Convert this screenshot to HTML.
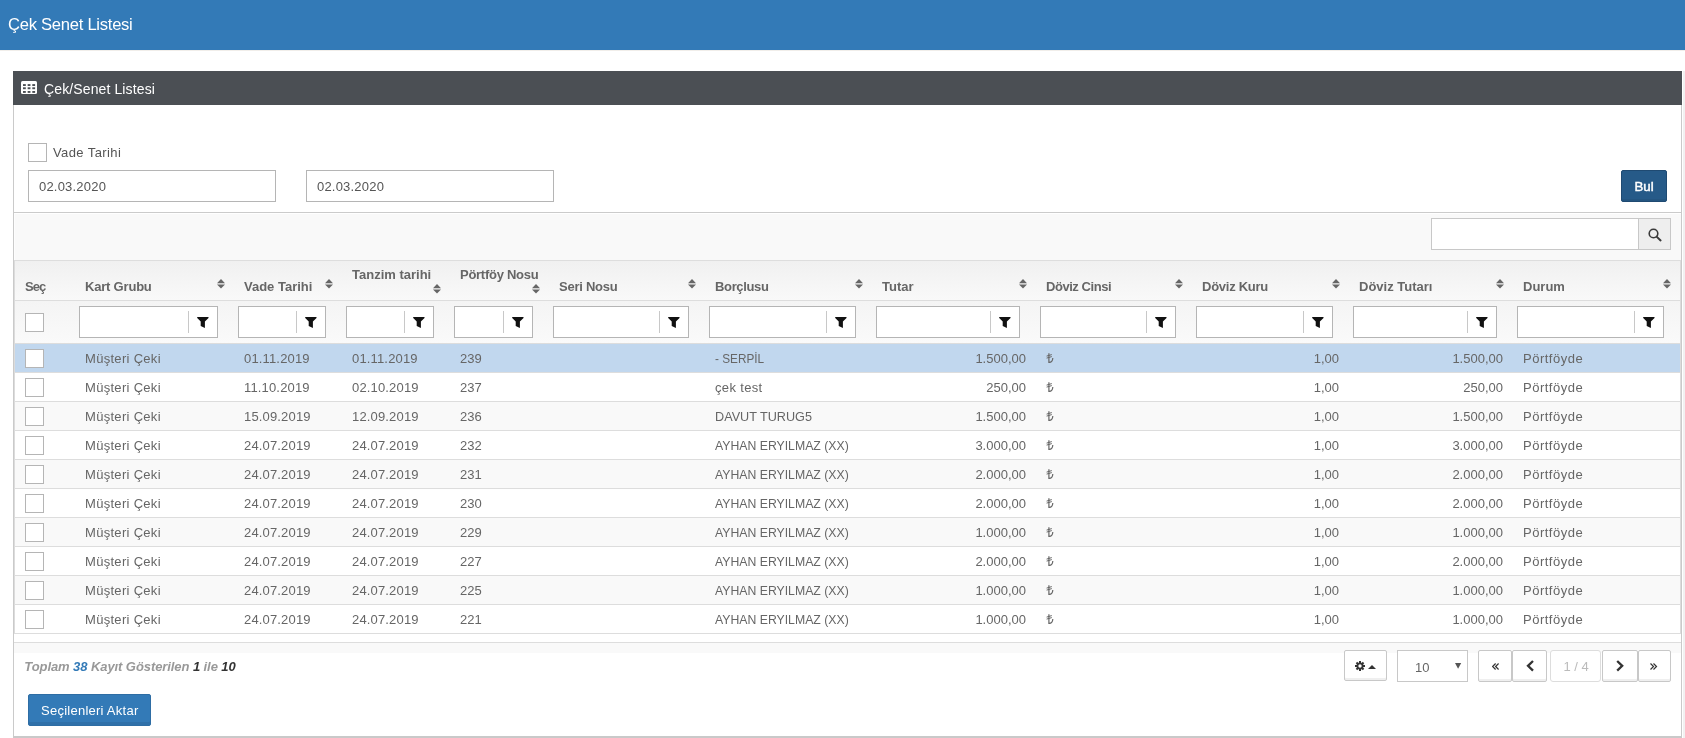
<!DOCTYPE html>
<html><head><meta charset="utf-8"><style>
html,body{margin:0;padding:0;}
body{width:1685px;height:738px;overflow:hidden;position:relative;background:#fff;font-family:"Liberation Sans", sans-serif;}
#root{position:absolute;left:0;top:0;width:1685px;height:738px;overflow:hidden;background:#fff;will-change:transform;}
#root>div,#root>svg{position:absolute;}
.t{white-space:nowrap;font-family:"Liberation Sans", sans-serif;}
</style></head><body><div id="root">
<div style="left:0px;top:0px;width:1685px;height:50px;background:#337ab7"></div>
<div style="left:0px;top:50px;width:1685px;height:1px;background:#f1eeea"></div>
<div class="t" style="left:8px;top:17.29px;font-size:16.6px;line-height:16.6px;font-weight:400;color:#fff;letter-spacing:-0.27px">Çek Senet Listesi</div>
<div style="left:1683px;top:71px;width:2px;height:667px;background:#f1f1f1"></div>
<div style="left:13px;top:71px;width:1669px;height:667px;border:1px solid #cacaca;border-top:none;border-bottom:2px solid #c9c9c9;box-sizing:border-box;background:#fff"></div>
<div style="left:13px;top:71px;width:1669px;height:34px;background:#4b4f54"></div>
<svg style="position:absolute;left:21px;top:81px" width="17" height="14" viewBox="0 0 17 14"><rect x="0" y="0" width="16" height="13" rx="1.5" fill="#fff"/><rect x="2.00" y="3.1" width="2.8" height="1.9" fill="#4b4f54"/><rect x="2.00" y="6.3" width="2.8" height="1.9" fill="#4b4f54"/><rect x="2.00" y="10" width="2.8" height="1.9" fill="#4b4f54"/><rect x="6.65" y="3.1" width="2.8" height="1.9" fill="#4b4f54"/><rect x="6.65" y="6.3" width="2.8" height="1.9" fill="#4b4f54"/><rect x="6.65" y="10" width="2.8" height="1.9" fill="#4b4f54"/><rect x="11.30" y="3.1" width="2.8" height="1.9" fill="#4b4f54"/><rect x="11.30" y="6.3" width="2.8" height="1.9" fill="#4b4f54"/><rect x="11.30" y="10" width="2.8" height="1.9" fill="#4b4f54"/></svg>
<div class="t" style="left:44px;top:82.10px;font-size:14px;line-height:14px;font-weight:400;color:#fff;letter-spacing:0.12px">Çek/Senet Listesi</div>
<div style="left:28px;top:143px;width:19px;height:19px;border:1px solid #b5b5b5;box-sizing:border-box;background:#fff"></div>
<div class="t" style="left:53px;top:145.95px;font-size:13px;line-height:13px;font-weight:400;color:#555;letter-spacing:0.4px">Vade Tarihi</div>
<div style="left:28px;top:170px;width:248px;height:32px;border:1px solid #b5b5b5;box-sizing:border-box;background:#fff"></div>
<div class="t" style="left:39px;top:179.95px;font-size:13px;line-height:13px;font-weight:400;color:#555;letter-spacing:0.2px">02.03.2020</div>
<div style="left:306px;top:170px;width:248px;height:32px;border:1px solid #b5b5b5;box-sizing:border-box;background:#fff"></div>
<div class="t" style="left:317px;top:179.95px;font-size:13px;line-height:13px;font-weight:400;color:#555;letter-spacing:0.2px">02.03.2020</div>
<div style="left:1621px;top:170px;width:46px;height:32px;background:#265a88;border:1px solid #1f4a72;box-sizing:border-box;border-radius:2px;box-shadow:inset 0 -2px 0 #245580"></div>
<div class="t" style="left:1634.5px;top:179.69px;font-size:13.3px;line-height:13.3px;font-weight:400;color:#fff;-webkit-text-stroke:0.45px #fff">Bul</div>
<div style="left:14px;top:212px;width:1667px;height:1px;background:#cbcbcb"></div>
<div style="left:14px;top:214px;width:1667px;height:46px;background:#f9f9f9;border-left:1px solid #fdfdfd;box-sizing:border-box"></div>
<div style="left:1431px;top:218px;width:240px;height:32px;border:1px solid #c8c8c8;box-sizing:border-box;background:#fff"></div>
<div style="left:1638px;top:218px;width:33px;height:32px;border:1px solid #c8c8c8;box-sizing:border-box;background:#eee"></div>
<svg style="position:absolute;left:1648px;top:228px" width="15" height="14" viewBox="0 0 15 14"><circle cx="5.5" cy="5.5" r="4.3" fill="none" stroke="#3a3a3a" stroke-width="1.6"/><line x1="8.6" y1="8.6" x2="12.6" y2="12.4" stroke="#3a3a3a" stroke-width="2" stroke-linecap="round"/></svg>
<div style="left:14px;top:260px;width:1667px;height:1px;background:#ddd"></div>
<div style="left:15px;top:261px;width:1665px;height:39px;background:linear-gradient(#f0f0f0,#f9f9f9)"></div>
<div style="left:14px;top:300px;width:1667px;height:1px;background:#ddd"></div>
<div style="left:15px;top:301px;width:1665px;height:42px;background:linear-gradient(#f4f4f4,#fafafa)"></div>
<div style="left:14px;top:343px;width:1667px;height:1px;background:#ddd"></div>
<div style="left:14px;top:260px;width:1px;height:374px;background:#dcdcdc"></div>
<div style="left:1680px;top:260px;width:1px;height:374px;background:#dcdcdc"></div>
<div class="t" style="left:25px;top:279.95px;font-size:13px;line-height:13px;font-weight:700;color:#666;letter-spacing:-0.9px">Seç</div>
<div class="t" style="left:85px;top:279.95px;font-size:13px;line-height:13px;font-weight:700;color:#666;letter-spacing:-0.2px">Kart Grubu</div>
<svg style="position:absolute;left:217px;top:279px" width="8" height="10" viewBox="0 0 8 10"><path d="M0 4.2 L4 0 L8 4.2 Z M0 5.4 L4 9.6 L8 5.4 Z" fill="#666"/></svg>
<div style="left:79px;top:306px;width:139px;height:32px;border:1px solid #b5b5b5;box-sizing:border-box;background:#fff"></div>
<div style="left:188px;top:311px;width:1px;height:22px;background:#c8c8c8"></div>
<svg style="position:absolute;left:197.2px;top:316.6px" width="12" height="11" viewBox="0 0 12 11"><path d="M0.2 0 H11.5 V0.9 L7.9 4.6 V11 L3.7 8.9 V4.6 L0.2 0.9 Z" fill="#111"/></svg>
<div class="t" style="left:244px;top:279.95px;font-size:13px;line-height:13px;font-weight:700;color:#666;letter-spacing:0px">Vade Tarihi</div>
<svg style="position:absolute;left:325px;top:279px" width="8" height="10" viewBox="0 0 8 10"><path d="M0 4.2 L4 0 L8 4.2 Z M0 5.4 L4 9.6 L8 5.4 Z" fill="#666"/></svg>
<div style="left:238px;top:306px;width:88px;height:32px;border:1px solid #b5b5b5;box-sizing:border-box;background:#fff"></div>
<div style="left:296px;top:311px;width:1px;height:22px;background:#c8c8c8"></div>
<svg style="position:absolute;left:305.2px;top:316.6px" width="12" height="11" viewBox="0 0 12 11"><path d="M0.2 0 H11.5 V0.9 L7.9 4.6 V11 L3.7 8.9 V4.6 L0.2 0.9 Z" fill="#111"/></svg>
<div class="t" style="left:352px;top:267.95px;font-size:13px;line-height:13px;font-weight:700;color:#666;letter-spacing:0px">Tanzim tarihi</div>
<svg style="position:absolute;left:433px;top:284px" width="8" height="10" viewBox="0 0 8 10"><path d="M0 4.2 L4 0 L8 4.2 Z M0 5.4 L4 9.6 L8 5.4 Z" fill="#666"/></svg>
<div style="left:346px;top:306px;width:88px;height:32px;border:1px solid #b5b5b5;box-sizing:border-box;background:#fff"></div>
<div style="left:404px;top:311px;width:1px;height:22px;background:#c8c8c8"></div>
<svg style="position:absolute;left:413.2px;top:316.6px" width="12" height="11" viewBox="0 0 12 11"><path d="M0.2 0 H11.5 V0.9 L7.9 4.6 V11 L3.7 8.9 V4.6 L0.2 0.9 Z" fill="#111"/></svg>
<div class="t" style="left:460px;top:267.95px;font-size:13px;line-height:13px;font-weight:700;color:#666;letter-spacing:-0.27px">Pörtföy Nosu</div>
<svg style="position:absolute;left:532px;top:284px" width="8" height="10" viewBox="0 0 8 10"><path d="M0 4.2 L4 0 L8 4.2 Z M0 5.4 L4 9.6 L8 5.4 Z" fill="#666"/></svg>
<div style="left:454px;top:306px;width:79px;height:32px;border:1px solid #b5b5b5;box-sizing:border-box;background:#fff"></div>
<div style="left:503px;top:311px;width:1px;height:22px;background:#c8c8c8"></div>
<svg style="position:absolute;left:512.2px;top:316.6px" width="12" height="11" viewBox="0 0 12 11"><path d="M0.2 0 H11.5 V0.9 L7.9 4.6 V11 L3.7 8.9 V4.6 L0.2 0.9 Z" fill="#111"/></svg>
<div class="t" style="left:559px;top:279.95px;font-size:13px;line-height:13px;font-weight:700;color:#666;letter-spacing:-0.25px">Seri Nosu</div>
<svg style="position:absolute;left:688px;top:279px" width="8" height="10" viewBox="0 0 8 10"><path d="M0 4.2 L4 0 L8 4.2 Z M0 5.4 L4 9.6 L8 5.4 Z" fill="#666"/></svg>
<div style="left:553px;top:306px;width:136px;height:32px;border:1px solid #b5b5b5;box-sizing:border-box;background:#fff"></div>
<div style="left:659px;top:311px;width:1px;height:22px;background:#c8c8c8"></div>
<svg style="position:absolute;left:668.2px;top:316.6px" width="12" height="11" viewBox="0 0 12 11"><path d="M0.2 0 H11.5 V0.9 L7.9 4.6 V11 L3.7 8.9 V4.6 L0.2 0.9 Z" fill="#111"/></svg>
<div class="t" style="left:715px;top:279.95px;font-size:13px;line-height:13px;font-weight:700;color:#666;letter-spacing:-0.35px">Borçlusu</div>
<svg style="position:absolute;left:855px;top:279px" width="8" height="10" viewBox="0 0 8 10"><path d="M0 4.2 L4 0 L8 4.2 Z M0 5.4 L4 9.6 L8 5.4 Z" fill="#666"/></svg>
<div style="left:709px;top:306px;width:147px;height:32px;border:1px solid #b5b5b5;box-sizing:border-box;background:#fff"></div>
<div style="left:826px;top:311px;width:1px;height:22px;background:#c8c8c8"></div>
<svg style="position:absolute;left:835.2px;top:316.6px" width="12" height="11" viewBox="0 0 12 11"><path d="M0.2 0 H11.5 V0.9 L7.9 4.6 V11 L3.7 8.9 V4.6 L0.2 0.9 Z" fill="#111"/></svg>
<div class="t" style="left:882px;top:279.95px;font-size:13px;line-height:13px;font-weight:700;color:#666;letter-spacing:0px">Tutar</div>
<svg style="position:absolute;left:1019px;top:279px" width="8" height="10" viewBox="0 0 8 10"><path d="M0 4.2 L4 0 L8 4.2 Z M0 5.4 L4 9.6 L8 5.4 Z" fill="#666"/></svg>
<div style="left:876px;top:306px;width:144px;height:32px;border:1px solid #b5b5b5;box-sizing:border-box;background:#fff"></div>
<div style="left:990px;top:311px;width:1px;height:22px;background:#c8c8c8"></div>
<svg style="position:absolute;left:999.2px;top:316.6px" width="12" height="11" viewBox="0 0 12 11"><path d="M0.2 0 H11.5 V0.9 L7.9 4.6 V11 L3.7 8.9 V4.6 L0.2 0.9 Z" fill="#111"/></svg>
<div class="t" style="left:1046px;top:279.95px;font-size:13px;line-height:13px;font-weight:700;color:#666;letter-spacing:-0.45px">Döviz Cinsi</div>
<svg style="position:absolute;left:1175px;top:279px" width="8" height="10" viewBox="0 0 8 10"><path d="M0 4.2 L4 0 L8 4.2 Z M0 5.4 L4 9.6 L8 5.4 Z" fill="#666"/></svg>
<div style="left:1040px;top:306px;width:136px;height:32px;border:1px solid #b5b5b5;box-sizing:border-box;background:#fff"></div>
<div style="left:1146px;top:311px;width:1px;height:22px;background:#c8c8c8"></div>
<svg style="position:absolute;left:1155.2px;top:316.6px" width="12" height="11" viewBox="0 0 12 11"><path d="M0.2 0 H11.5 V0.9 L7.9 4.6 V11 L3.7 8.9 V4.6 L0.2 0.9 Z" fill="#111"/></svg>
<div class="t" style="left:1202px;top:279.95px;font-size:13px;line-height:13px;font-weight:700;color:#666;letter-spacing:-0.26px">Döviz Kuru</div>
<svg style="position:absolute;left:1332px;top:279px" width="8" height="10" viewBox="0 0 8 10"><path d="M0 4.2 L4 0 L8 4.2 Z M0 5.4 L4 9.6 L8 5.4 Z" fill="#666"/></svg>
<div style="left:1196px;top:306px;width:137px;height:32px;border:1px solid #b5b5b5;box-sizing:border-box;background:#fff"></div>
<div style="left:1303px;top:311px;width:1px;height:22px;background:#c8c8c8"></div>
<svg style="position:absolute;left:1312.2px;top:316.6px" width="12" height="11" viewBox="0 0 12 11"><path d="M0.2 0 H11.5 V0.9 L7.9 4.6 V11 L3.7 8.9 V4.6 L0.2 0.9 Z" fill="#111"/></svg>
<div class="t" style="left:1359px;top:279.95px;font-size:13px;line-height:13px;font-weight:700;color:#666;letter-spacing:0px">Döviz Tutarı</div>
<svg style="position:absolute;left:1496px;top:279px" width="8" height="10" viewBox="0 0 8 10"><path d="M0 4.2 L4 0 L8 4.2 Z M0 5.4 L4 9.6 L8 5.4 Z" fill="#666"/></svg>
<div style="left:1353px;top:306px;width:144px;height:32px;border:1px solid #b5b5b5;box-sizing:border-box;background:#fff"></div>
<div style="left:1467px;top:311px;width:1px;height:22px;background:#c8c8c8"></div>
<svg style="position:absolute;left:1476.2px;top:316.6px" width="12" height="11" viewBox="0 0 12 11"><path d="M0.2 0 H11.5 V0.9 L7.9 4.6 V11 L3.7 8.9 V4.6 L0.2 0.9 Z" fill="#111"/></svg>
<div class="t" style="left:1523px;top:279.95px;font-size:13px;line-height:13px;font-weight:700;color:#666;letter-spacing:0px">Durum</div>
<svg style="position:absolute;left:1663px;top:279px" width="8" height="10" viewBox="0 0 8 10"><path d="M0 4.2 L4 0 L8 4.2 Z M0 5.4 L4 9.6 L8 5.4 Z" fill="#666"/></svg>
<div style="left:1517px;top:306px;width:147px;height:32px;border:1px solid #b5b5b5;box-sizing:border-box;background:#fff"></div>
<div style="left:1634px;top:311px;width:1px;height:22px;background:#c8c8c8"></div>
<svg style="position:absolute;left:1643.2px;top:316.6px" width="12" height="11" viewBox="0 0 12 11"><path d="M0.2 0 H11.5 V0.9 L7.9 4.6 V11 L3.7 8.9 V4.6 L0.2 0.9 Z" fill="#111"/></svg>
<div style="left:25px;top:313px;width:19px;height:19px;border:1px solid #b5b5b5;box-sizing:border-box;background:#fff"></div>
<div style="left:15px;top:344px;width:1665px;height:28px;background:#c1d7ee"></div>
<div style="left:14px;top:372px;width:1667px;height:1px;background:#ddd"></div>
<div style="left:25px;top:349px;width:19px;height:19px;border:1px solid #b5b5b5;box-sizing:border-box;background:#fff"></div>
<div class="t" style="left:85px;top:351.95px;font-size:13px;line-height:13px;font-weight:400;color:#666;letter-spacing:0.3px">Müşteri Çeki</div>
<div class="t" style="left:244px;top:351.95px;font-size:13px;line-height:13px;font-weight:400;color:#666;letter-spacing:0.16px">01.11.2019</div>
<div class="t" style="left:352px;top:351.95px;font-size:13px;line-height:13px;font-weight:400;color:#666;letter-spacing:0.16px">01.11.2019</div>
<div class="t" style="left:460px;top:351.95px;font-size:13px;line-height:13px;font-weight:400;color:#666;">239</div>
<div class="t" style="left:715px;top:351.95px;font-size:13px;line-height:13px;font-weight:400;color:#666;letter-spacing:0;transform:scaleX(0.906);transform-origin:0 0">- SERPİL</div>
<div class="t" style="right:659px;top:351.95px;font-size:13px;line-height:13px;font-weight:400;color:#666;">1.500,00</div>
<svg style="position:absolute;left:1045.5px;top:352.5px" width="8" height="11" viewBox="0 0 8 11"><path d="M2.9 0.3 V9.4 Q6.6 9.6 6.8 5" fill="none" stroke="#666" stroke-width="1.2"/><path d="M0.6 3.1 L5.8 1.6 M0.6 5.1 L5.8 3.6" stroke="#666" stroke-width="1"/></svg>
<div class="t" style="right:346px;top:351.95px;font-size:13px;line-height:13px;font-weight:400;color:#666;">1,00</div>
<div class="t" style="right:182px;top:351.95px;font-size:13px;line-height:13px;font-weight:400;color:#666;">1.500,00</div>
<div class="t" style="left:1523px;top:351.95px;font-size:13px;line-height:13px;font-weight:400;color:#666;letter-spacing:0.5px">Pörtföyde</div>
<div style="left:15px;top:373px;width:1665px;height:28px;background:#fff"></div>
<div style="left:14px;top:401px;width:1667px;height:1px;background:#ddd"></div>
<div style="left:25px;top:378px;width:19px;height:19px;border:1px solid #b5b5b5;box-sizing:border-box;background:#fff"></div>
<div class="t" style="left:85px;top:380.95px;font-size:13px;line-height:13px;font-weight:400;color:#666;letter-spacing:0.3px">Müşteri Çeki</div>
<div class="t" style="left:244px;top:380.95px;font-size:13px;line-height:13px;font-weight:400;color:#666;letter-spacing:0.16px">11.10.2019</div>
<div class="t" style="left:352px;top:380.95px;font-size:13px;line-height:13px;font-weight:400;color:#666;letter-spacing:0.16px">02.10.2019</div>
<div class="t" style="left:460px;top:380.95px;font-size:13px;line-height:13px;font-weight:400;color:#666;">237</div>
<div class="t" style="left:715px;top:380.95px;font-size:13px;line-height:13px;font-weight:400;color:#666;letter-spacing:0.34px">çek test</div>
<div class="t" style="right:659px;top:380.95px;font-size:13px;line-height:13px;font-weight:400;color:#666;">250,00</div>
<svg style="position:absolute;left:1045.5px;top:381.5px" width="8" height="11" viewBox="0 0 8 11"><path d="M2.9 0.3 V9.4 Q6.6 9.6 6.8 5" fill="none" stroke="#666" stroke-width="1.2"/><path d="M0.6 3.1 L5.8 1.6 M0.6 5.1 L5.8 3.6" stroke="#666" stroke-width="1"/></svg>
<div class="t" style="right:346px;top:380.95px;font-size:13px;line-height:13px;font-weight:400;color:#666;">1,00</div>
<div class="t" style="right:182px;top:380.95px;font-size:13px;line-height:13px;font-weight:400;color:#666;">250,00</div>
<div class="t" style="left:1523px;top:380.95px;font-size:13px;line-height:13px;font-weight:400;color:#666;letter-spacing:0.5px">Pörtföyde</div>
<div style="left:15px;top:402px;width:1665px;height:28px;background:#f9f9f9"></div>
<div style="left:14px;top:430px;width:1667px;height:1px;background:#ddd"></div>
<div style="left:25px;top:407px;width:19px;height:19px;border:1px solid #b5b5b5;box-sizing:border-box;background:#fff"></div>
<div class="t" style="left:85px;top:409.95px;font-size:13px;line-height:13px;font-weight:400;color:#666;letter-spacing:0.3px">Müşteri Çeki</div>
<div class="t" style="left:244px;top:409.95px;font-size:13px;line-height:13px;font-weight:400;color:#666;letter-spacing:0.16px">15.09.2019</div>
<div class="t" style="left:352px;top:409.95px;font-size:13px;line-height:13px;font-weight:400;color:#666;letter-spacing:0.16px">12.09.2019</div>
<div class="t" style="left:460px;top:409.95px;font-size:13px;line-height:13px;font-weight:400;color:#666;">236</div>
<div class="t" style="left:715px;top:409.95px;font-size:13px;line-height:13px;font-weight:400;color:#666;transform:scaleX(0.973);transform-origin:0 0">DAVUT TURUG5</div>
<div class="t" style="right:659px;top:409.95px;font-size:13px;line-height:13px;font-weight:400;color:#666;">1.500,00</div>
<svg style="position:absolute;left:1045.5px;top:410.5px" width="8" height="11" viewBox="0 0 8 11"><path d="M2.9 0.3 V9.4 Q6.6 9.6 6.8 5" fill="none" stroke="#666" stroke-width="1.2"/><path d="M0.6 3.1 L5.8 1.6 M0.6 5.1 L5.8 3.6" stroke="#666" stroke-width="1"/></svg>
<div class="t" style="right:346px;top:409.95px;font-size:13px;line-height:13px;font-weight:400;color:#666;">1,00</div>
<div class="t" style="right:182px;top:409.95px;font-size:13px;line-height:13px;font-weight:400;color:#666;">1.500,00</div>
<div class="t" style="left:1523px;top:409.95px;font-size:13px;line-height:13px;font-weight:400;color:#666;letter-spacing:0.5px">Pörtföyde</div>
<div style="left:15px;top:431px;width:1665px;height:28px;background:#fff"></div>
<div style="left:14px;top:459px;width:1667px;height:1px;background:#ddd"></div>
<div style="left:25px;top:436px;width:19px;height:19px;border:1px solid #b5b5b5;box-sizing:border-box;background:#fff"></div>
<div class="t" style="left:85px;top:438.95px;font-size:13px;line-height:13px;font-weight:400;color:#666;letter-spacing:0.3px">Müşteri Çeki</div>
<div class="t" style="left:244px;top:438.95px;font-size:13px;line-height:13px;font-weight:400;color:#666;letter-spacing:0.16px">24.07.2019</div>
<div class="t" style="left:352px;top:438.95px;font-size:13px;line-height:13px;font-weight:400;color:#666;letter-spacing:0.16px">24.07.2019</div>
<div class="t" style="left:460px;top:438.95px;font-size:13px;line-height:13px;font-weight:400;color:#666;">232</div>
<div class="t" style="left:715px;top:438.95px;font-size:13px;line-height:13px;font-weight:400;color:#666;transform:scaleX(0.943);transform-origin:0 0">AYHAN ERYILMAZ (XX)</div>
<div class="t" style="right:659px;top:438.95px;font-size:13px;line-height:13px;font-weight:400;color:#666;">3.000,00</div>
<svg style="position:absolute;left:1045.5px;top:439.5px" width="8" height="11" viewBox="0 0 8 11"><path d="M2.9 0.3 V9.4 Q6.6 9.6 6.8 5" fill="none" stroke="#666" stroke-width="1.2"/><path d="M0.6 3.1 L5.8 1.6 M0.6 5.1 L5.8 3.6" stroke="#666" stroke-width="1"/></svg>
<div class="t" style="right:346px;top:438.95px;font-size:13px;line-height:13px;font-weight:400;color:#666;">1,00</div>
<div class="t" style="right:182px;top:438.95px;font-size:13px;line-height:13px;font-weight:400;color:#666;">3.000,00</div>
<div class="t" style="left:1523px;top:438.95px;font-size:13px;line-height:13px;font-weight:400;color:#666;letter-spacing:0.5px">Pörtföyde</div>
<div style="left:15px;top:460px;width:1665px;height:28px;background:#f9f9f9"></div>
<div style="left:14px;top:488px;width:1667px;height:1px;background:#ddd"></div>
<div style="left:25px;top:465px;width:19px;height:19px;border:1px solid #b5b5b5;box-sizing:border-box;background:#fff"></div>
<div class="t" style="left:85px;top:467.95px;font-size:13px;line-height:13px;font-weight:400;color:#666;letter-spacing:0.3px">Müşteri Çeki</div>
<div class="t" style="left:244px;top:467.95px;font-size:13px;line-height:13px;font-weight:400;color:#666;letter-spacing:0.16px">24.07.2019</div>
<div class="t" style="left:352px;top:467.95px;font-size:13px;line-height:13px;font-weight:400;color:#666;letter-spacing:0.16px">24.07.2019</div>
<div class="t" style="left:460px;top:467.95px;font-size:13px;line-height:13px;font-weight:400;color:#666;">231</div>
<div class="t" style="left:715px;top:467.95px;font-size:13px;line-height:13px;font-weight:400;color:#666;transform:scaleX(0.943);transform-origin:0 0">AYHAN ERYILMAZ (XX)</div>
<div class="t" style="right:659px;top:467.95px;font-size:13px;line-height:13px;font-weight:400;color:#666;">2.000,00</div>
<svg style="position:absolute;left:1045.5px;top:468.5px" width="8" height="11" viewBox="0 0 8 11"><path d="M2.9 0.3 V9.4 Q6.6 9.6 6.8 5" fill="none" stroke="#666" stroke-width="1.2"/><path d="M0.6 3.1 L5.8 1.6 M0.6 5.1 L5.8 3.6" stroke="#666" stroke-width="1"/></svg>
<div class="t" style="right:346px;top:467.95px;font-size:13px;line-height:13px;font-weight:400;color:#666;">1,00</div>
<div class="t" style="right:182px;top:467.95px;font-size:13px;line-height:13px;font-weight:400;color:#666;">2.000,00</div>
<div class="t" style="left:1523px;top:467.95px;font-size:13px;line-height:13px;font-weight:400;color:#666;letter-spacing:0.5px">Pörtföyde</div>
<div style="left:15px;top:489px;width:1665px;height:28px;background:#fff"></div>
<div style="left:14px;top:517px;width:1667px;height:1px;background:#ddd"></div>
<div style="left:25px;top:494px;width:19px;height:19px;border:1px solid #b5b5b5;box-sizing:border-box;background:#fff"></div>
<div class="t" style="left:85px;top:496.95px;font-size:13px;line-height:13px;font-weight:400;color:#666;letter-spacing:0.3px">Müşteri Çeki</div>
<div class="t" style="left:244px;top:496.95px;font-size:13px;line-height:13px;font-weight:400;color:#666;letter-spacing:0.16px">24.07.2019</div>
<div class="t" style="left:352px;top:496.95px;font-size:13px;line-height:13px;font-weight:400;color:#666;letter-spacing:0.16px">24.07.2019</div>
<div class="t" style="left:460px;top:496.95px;font-size:13px;line-height:13px;font-weight:400;color:#666;">230</div>
<div class="t" style="left:715px;top:496.95px;font-size:13px;line-height:13px;font-weight:400;color:#666;transform:scaleX(0.943);transform-origin:0 0">AYHAN ERYILMAZ (XX)</div>
<div class="t" style="right:659px;top:496.95px;font-size:13px;line-height:13px;font-weight:400;color:#666;">2.000,00</div>
<svg style="position:absolute;left:1045.5px;top:497.5px" width="8" height="11" viewBox="0 0 8 11"><path d="M2.9 0.3 V9.4 Q6.6 9.6 6.8 5" fill="none" stroke="#666" stroke-width="1.2"/><path d="M0.6 3.1 L5.8 1.6 M0.6 5.1 L5.8 3.6" stroke="#666" stroke-width="1"/></svg>
<div class="t" style="right:346px;top:496.95px;font-size:13px;line-height:13px;font-weight:400;color:#666;">1,00</div>
<div class="t" style="right:182px;top:496.95px;font-size:13px;line-height:13px;font-weight:400;color:#666;">2.000,00</div>
<div class="t" style="left:1523px;top:496.95px;font-size:13px;line-height:13px;font-weight:400;color:#666;letter-spacing:0.5px">Pörtföyde</div>
<div style="left:15px;top:518px;width:1665px;height:28px;background:#f9f9f9"></div>
<div style="left:14px;top:546px;width:1667px;height:1px;background:#ddd"></div>
<div style="left:25px;top:523px;width:19px;height:19px;border:1px solid #b5b5b5;box-sizing:border-box;background:#fff"></div>
<div class="t" style="left:85px;top:525.95px;font-size:13px;line-height:13px;font-weight:400;color:#666;letter-spacing:0.3px">Müşteri Çeki</div>
<div class="t" style="left:244px;top:525.95px;font-size:13px;line-height:13px;font-weight:400;color:#666;letter-spacing:0.16px">24.07.2019</div>
<div class="t" style="left:352px;top:525.95px;font-size:13px;line-height:13px;font-weight:400;color:#666;letter-spacing:0.16px">24.07.2019</div>
<div class="t" style="left:460px;top:525.95px;font-size:13px;line-height:13px;font-weight:400;color:#666;">229</div>
<div class="t" style="left:715px;top:525.95px;font-size:13px;line-height:13px;font-weight:400;color:#666;transform:scaleX(0.943);transform-origin:0 0">AYHAN ERYILMAZ (XX)</div>
<div class="t" style="right:659px;top:525.95px;font-size:13px;line-height:13px;font-weight:400;color:#666;">1.000,00</div>
<svg style="position:absolute;left:1045.5px;top:526.5px" width="8" height="11" viewBox="0 0 8 11"><path d="M2.9 0.3 V9.4 Q6.6 9.6 6.8 5" fill="none" stroke="#666" stroke-width="1.2"/><path d="M0.6 3.1 L5.8 1.6 M0.6 5.1 L5.8 3.6" stroke="#666" stroke-width="1"/></svg>
<div class="t" style="right:346px;top:525.95px;font-size:13px;line-height:13px;font-weight:400;color:#666;">1,00</div>
<div class="t" style="right:182px;top:525.95px;font-size:13px;line-height:13px;font-weight:400;color:#666;">1.000,00</div>
<div class="t" style="left:1523px;top:525.95px;font-size:13px;line-height:13px;font-weight:400;color:#666;letter-spacing:0.5px">Pörtföyde</div>
<div style="left:15px;top:547px;width:1665px;height:28px;background:#fff"></div>
<div style="left:14px;top:575px;width:1667px;height:1px;background:#ddd"></div>
<div style="left:25px;top:552px;width:19px;height:19px;border:1px solid #b5b5b5;box-sizing:border-box;background:#fff"></div>
<div class="t" style="left:85px;top:554.95px;font-size:13px;line-height:13px;font-weight:400;color:#666;letter-spacing:0.3px">Müşteri Çeki</div>
<div class="t" style="left:244px;top:554.95px;font-size:13px;line-height:13px;font-weight:400;color:#666;letter-spacing:0.16px">24.07.2019</div>
<div class="t" style="left:352px;top:554.95px;font-size:13px;line-height:13px;font-weight:400;color:#666;letter-spacing:0.16px">24.07.2019</div>
<div class="t" style="left:460px;top:554.95px;font-size:13px;line-height:13px;font-weight:400;color:#666;">227</div>
<div class="t" style="left:715px;top:554.95px;font-size:13px;line-height:13px;font-weight:400;color:#666;transform:scaleX(0.943);transform-origin:0 0">AYHAN ERYILMAZ (XX)</div>
<div class="t" style="right:659px;top:554.95px;font-size:13px;line-height:13px;font-weight:400;color:#666;">2.000,00</div>
<svg style="position:absolute;left:1045.5px;top:555.5px" width="8" height="11" viewBox="0 0 8 11"><path d="M2.9 0.3 V9.4 Q6.6 9.6 6.8 5" fill="none" stroke="#666" stroke-width="1.2"/><path d="M0.6 3.1 L5.8 1.6 M0.6 5.1 L5.8 3.6" stroke="#666" stroke-width="1"/></svg>
<div class="t" style="right:346px;top:554.95px;font-size:13px;line-height:13px;font-weight:400;color:#666;">1,00</div>
<div class="t" style="right:182px;top:554.95px;font-size:13px;line-height:13px;font-weight:400;color:#666;">2.000,00</div>
<div class="t" style="left:1523px;top:554.95px;font-size:13px;line-height:13px;font-weight:400;color:#666;letter-spacing:0.5px">Pörtföyde</div>
<div style="left:15px;top:576px;width:1665px;height:28px;background:#f9f9f9"></div>
<div style="left:14px;top:604px;width:1667px;height:1px;background:#ddd"></div>
<div style="left:25px;top:581px;width:19px;height:19px;border:1px solid #b5b5b5;box-sizing:border-box;background:#fff"></div>
<div class="t" style="left:85px;top:583.95px;font-size:13px;line-height:13px;font-weight:400;color:#666;letter-spacing:0.3px">Müşteri Çeki</div>
<div class="t" style="left:244px;top:583.95px;font-size:13px;line-height:13px;font-weight:400;color:#666;letter-spacing:0.16px">24.07.2019</div>
<div class="t" style="left:352px;top:583.95px;font-size:13px;line-height:13px;font-weight:400;color:#666;letter-spacing:0.16px">24.07.2019</div>
<div class="t" style="left:460px;top:583.95px;font-size:13px;line-height:13px;font-weight:400;color:#666;">225</div>
<div class="t" style="left:715px;top:583.95px;font-size:13px;line-height:13px;font-weight:400;color:#666;transform:scaleX(0.943);transform-origin:0 0">AYHAN ERYILMAZ (XX)</div>
<div class="t" style="right:659px;top:583.95px;font-size:13px;line-height:13px;font-weight:400;color:#666;">1.000,00</div>
<svg style="position:absolute;left:1045.5px;top:584.5px" width="8" height="11" viewBox="0 0 8 11"><path d="M2.9 0.3 V9.4 Q6.6 9.6 6.8 5" fill="none" stroke="#666" stroke-width="1.2"/><path d="M0.6 3.1 L5.8 1.6 M0.6 5.1 L5.8 3.6" stroke="#666" stroke-width="1"/></svg>
<div class="t" style="right:346px;top:583.95px;font-size:13px;line-height:13px;font-weight:400;color:#666;">1,00</div>
<div class="t" style="right:182px;top:583.95px;font-size:13px;line-height:13px;font-weight:400;color:#666;">1.000,00</div>
<div class="t" style="left:1523px;top:583.95px;font-size:13px;line-height:13px;font-weight:400;color:#666;letter-spacing:0.5px">Pörtföyde</div>
<div style="left:15px;top:605px;width:1665px;height:28px;background:#fff"></div>
<div style="left:14px;top:633px;width:1667px;height:1px;background:#ddd"></div>
<div style="left:25px;top:610px;width:19px;height:19px;border:1px solid #b5b5b5;box-sizing:border-box;background:#fff"></div>
<div class="t" style="left:85px;top:612.95px;font-size:13px;line-height:13px;font-weight:400;color:#666;letter-spacing:0.3px">Müşteri Çeki</div>
<div class="t" style="left:244px;top:612.95px;font-size:13px;line-height:13px;font-weight:400;color:#666;letter-spacing:0.16px">24.07.2019</div>
<div class="t" style="left:352px;top:612.95px;font-size:13px;line-height:13px;font-weight:400;color:#666;letter-spacing:0.16px">24.07.2019</div>
<div class="t" style="left:460px;top:612.95px;font-size:13px;line-height:13px;font-weight:400;color:#666;">221</div>
<div class="t" style="left:715px;top:612.95px;font-size:13px;line-height:13px;font-weight:400;color:#666;transform:scaleX(0.943);transform-origin:0 0">AYHAN ERYILMAZ (XX)</div>
<div class="t" style="right:659px;top:612.95px;font-size:13px;line-height:13px;font-weight:400;color:#666;">1.000,00</div>
<svg style="position:absolute;left:1045.5px;top:613.5px" width="8" height="11" viewBox="0 0 8 11"><path d="M2.9 0.3 V9.4 Q6.6 9.6 6.8 5" fill="none" stroke="#666" stroke-width="1.2"/><path d="M0.6 3.1 L5.8 1.6 M0.6 5.1 L5.8 3.6" stroke="#666" stroke-width="1"/></svg>
<div class="t" style="right:346px;top:612.95px;font-size:13px;line-height:13px;font-weight:400;color:#666;">1,00</div>
<div class="t" style="right:182px;top:612.95px;font-size:13px;line-height:13px;font-weight:400;color:#666;">1.000,00</div>
<div class="t" style="left:1523px;top:612.95px;font-size:13px;line-height:13px;font-weight:400;color:#666;letter-spacing:0.5px">Pörtföyde</div>
<div style="left:14px;top:642px;width:1667px;height:1px;background:#ddd"></div>
<div style="left:14px;top:643px;width:1667px;height:10px;background:#f9f9f9"></div>
<div class="t" style="left:24.3px;top:659.95px;font-size:13px;line-height:13px;font-weight:700;font-style:italic;color:#999;letter-spacing:-0.08px">Toplam <span style="color:#337ab7">38</span> Kayıt Gösterilen <span style="color:#333">1</span> ile <span style="color:#333">10</span></div>
<div style="left:1344px;top:650px;width:43px;height:31px;border:1px solid #c8c8c8;box-sizing:border-box;border-radius:2px;background:#fff;box-shadow:inset 0 -2px 0 #efefef"></div>
<svg style="position:absolute;left:1354.8px;top:660.7px" width="10" height="10" viewBox="0 0 10 10"><g fill="#333"><rect x="4" y="0" width="2" height="10" transform="rotate(0 5 5)"/><rect x="4" y="0" width="2" height="10" transform="rotate(45 5 5)"/><rect x="4" y="0" width="2" height="10" transform="rotate(90 5 5)"/><rect x="4" y="0" width="2" height="10" transform="rotate(135 5 5)"/><circle cx="5" cy="5" r="3.5"/></g><circle cx="5" cy="5" r="1.7" fill="#fff"/></svg>
<svg style="position:absolute;left:1368.4px;top:664.8px" width="9" height="5" viewBox="0 0 9 5"><path d="M0 4.1 L4 0 L8 4.1 Z" fill="#333"/></svg>
<div style="left:1397px;top:650px;width:71px;height:32px;border:1px solid #c8c8c8;box-sizing:border-box;background:#fff"></div>
<div class="t" style="left:1415px;top:660.95px;font-size:13px;line-height:13px;font-weight:400;color:#666;">10</div>
<svg style="position:absolute;left:1455px;top:663px" width="7" height="6" viewBox="0 0 7 6"><path d="M0 0 H6.2 L3.1 5.8 Z" fill="#555"/></svg>
<div style="left:1478px;top:650px;width:34px;height:32px;border:1px solid #c8c8c8;box-sizing:border-box;border-radius:2px;background:#fff;box-shadow:inset 0 -2px 0 #efefef"></div>
<div style="left:1512px;top:650px;width:35px;height:32px;border:1px solid #c8c8c8;box-sizing:border-box;border-radius:2px;background:#fff;box-shadow:inset 0 -2px 0 #efefef"></div>
<div style="left:1602px;top:650px;width:36px;height:32px;border:1px solid #c8c8c8;box-sizing:border-box;border-radius:2px;background:#fff;box-shadow:inset 0 -2px 0 #efefef"></div>
<div style="left:1638px;top:650px;width:33px;height:32px;border:1px solid #c8c8c8;box-sizing:border-box;border-radius:2px;background:#fff;box-shadow:inset 0 -2px 0 #efefef"></div>
<div style="left:1550px;top:650px;width:51px;height:32px;border:1px solid #ddd;box-sizing:border-box;border-radius:3px;background:#fff"></div>
<div class="t" style="left:1563.5px;top:659.95px;font-size:13px;line-height:13px;font-weight:400;color:#bbb;">1 / 4</div>
<svg style="position:absolute;left:1491.7px;top:663px" width="7.5" height="7.5" viewBox="0 0 7.5 7.5"><path d="M3.6 0.5 L0.6 3.5 L3.6 6.5 M6.6 0.5 L3.6 3.5 L6.6 6.5" fill="none" stroke="#333" stroke-width="1.2"/></svg>
<svg style="position:absolute;left:1650.4px;top:663px" width="7.5" height="7.5" viewBox="0 0 7.5 7.5"><path d="M0.5 0.5 L3.5 3.5 L0.5 6.5 M3.5 0.5 L6.5 3.5 L3.5 6.5" fill="none" stroke="#333" stroke-width="1.2"/></svg>
<svg style="position:absolute;left:1525.5px;top:660px" width="9" height="12" viewBox="0 0 9 12"><path d="M7 1 L2 5.85 L7 10.7" fill="none" stroke="#333" stroke-width="2.3"/></svg>
<svg style="position:absolute;left:1615.5px;top:660px" width="9" height="12" viewBox="0 0 9 12"><path d="M1.2 1 L6.2 5.85 L1.2 10.7" fill="none" stroke="#333" stroke-width="2.3"/></svg>
<div style="left:28px;top:694px;width:123px;height:32px;background:#337ab7;border:1px solid #2e6da4;box-sizing:border-box;border-radius:2px;box-shadow:inset 0 -3px 0 #2f70a9"></div>
<div class="t" style="left:41px;top:703.95px;font-size:13px;line-height:13px;font-weight:400;color:#fff;letter-spacing:0.25px">Seçilenleri Aktar</div>
</div></body></html>
